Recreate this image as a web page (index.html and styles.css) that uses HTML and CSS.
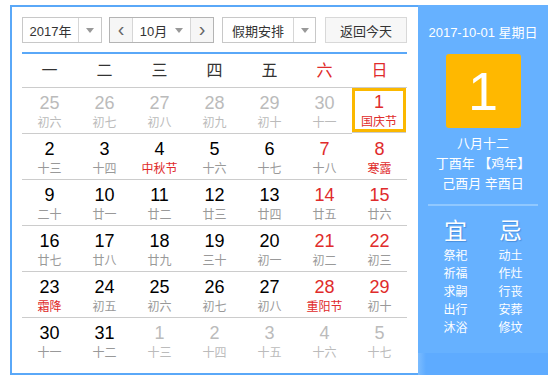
FILE: index.html
```html
<!DOCTYPE html>
<html lang="zh-CN">
<head>
  <meta charset="UTF-8">
  <title>万年历</title>
  <link rel="stylesheet" href="styles.css">
</head>
<body>
<div class="calendar">
  <div class="main">
    <div class="toolbar">
      <div class="select select-year">
        <span class="select-text">2017年</span>
        <span class="select-arrow"><i class="caret"></i></span>
      </div>
      <div class="month-group">
        <span class="month-btn">&lsaquo;</span>
        <span class="month-select">10月 <i class="caret"></i></span>
        <span class="month-btn">&rsaquo;</span>
      </div>
      <div class="select select-holiday">
        <span class="select-text">假期安排</span>
        <span class="select-arrow"><i class="caret"></i></span>
      </div>
      <button class="btn-today">返回今天</button>
    </div>

    <div class="weekdays">
      <span>一</span><span>二</span><span>三</span><span>四</span><span>五</span>
      <span class="red">六</span><span class="red">日</span>
    </div>

    <div class="days">
      <div class="day other"><b>25</b><em>初六</em></div>
      <div class="day other"><b>26</b><em>初七</em></div>
      <div class="day other"><b>27</b><em>初八</em></div>
      <div class="day other"><b>28</b><em>初九</em></div>
      <div class="day other"><b>29</b><em>初十</em></div>
      <div class="day other"><b>30</b><em>十一</em></div>
      <div class="day weekend fest selected"><b>1</b><em>国庆节</em></div>

      <div class="day"><b>2</b><em>十三</em></div>
      <div class="day"><b>3</b><em>十四</em></div>
      <div class="day fest"><b>4</b><em>中秋节</em></div>
      <div class="day"><b>5</b><em>十六</em></div>
      <div class="day"><b>6</b><em>十七</em></div>
      <div class="day weekend"><b>7</b><em>十八</em></div>
      <div class="day weekend fest"><b>8</b><em>寒露</em></div>

      <div class="day"><b>9</b><em>二十</em></div>
      <div class="day"><b>10</b><em>廿一</em></div>
      <div class="day"><b>11</b><em>廿二</em></div>
      <div class="day"><b>12</b><em>廿三</em></div>
      <div class="day"><b>13</b><em>廿四</em></div>
      <div class="day weekend"><b>14</b><em>廿五</em></div>
      <div class="day weekend"><b>15</b><em>廿六</em></div>

      <div class="day"><b>16</b><em>廿七</em></div>
      <div class="day"><b>17</b><em>廿八</em></div>
      <div class="day"><b>18</b><em>廿九</em></div>
      <div class="day"><b>19</b><em>三十</em></div>
      <div class="day"><b>20</b><em>初一</em></div>
      <div class="day weekend"><b>21</b><em>初二</em></div>
      <div class="day weekend"><b>22</b><em>初三</em></div>

      <div class="day fest"><b>23</b><em>霜降</em></div>
      <div class="day"><b>24</b><em>初五</em></div>
      <div class="day"><b>25</b><em>初六</em></div>
      <div class="day"><b>26</b><em>初七</em></div>
      <div class="day"><b>27</b><em>初八</em></div>
      <div class="day weekend fest"><b>28</b><em>重阳节</em></div>
      <div class="day weekend"><b>29</b><em>初十</em></div>

      <div class="day"><b>30</b><em>十一</em></div>
      <div class="day"><b>31</b><em>十二</em></div>
      <div class="day other"><b>1</b><em>十三</em></div>
      <div class="day other"><b>2</b><em>十四</em></div>
      <div class="day other"><b>3</b><em>十五</em></div>
      <div class="day other"><b>4</b><em>十六</em></div>
      <div class="day other"><b>5</b><em>十七</em></div>
    </div>
  </div>

  <div class="side">
    <p class="side-date">2017-10-01 星期日</p>
    <div class="side-day">1</div>
    <div class="side-lunar">
      <p>八月十二</p>
      <p>丁酉年 【鸡年】</p>
      <p>己酉月 辛酉日</p>
    </div>
    <hr class="side-line">
    <div class="almanac">
      <div class="almanac-col">
        <h3>宜</h3>
        <p>祭祀</p><p>祈福</p><p>求嗣</p><p>出行</p><p>沐浴</p>
      </div>
      <div class="almanac-col">
        <h3>忌</h3>
        <p>动土</p><p>作灶</p><p>行丧</p><p>安葬</p><p>修坟</p>
      </div>
    </div>
    <div class="side-foot"></div>
  </div>
</div>
</body>
</html>
```

FILE: styles.css
```css
body {
  margin: 0;
  font-family: 'Liberation Sans', 'Noto Sans CJK SC', sans-serif;
  color: #333333;
}

p, h3 {
  margin: 0;
}

.calendar {
  display: flex;
  width: 534px;
  height: 366px;
  margin: 5px 0 0 10px;
  border: 2px solid #5aa8f8;
  background: #ffffff;
}

.main {
  width: 385px;
  padding: 10px 11px 0 10px;
}

/* toolbar */

.toolbar {
  display: flex;
  height: 26px;
  font-size: 13px;
}

.select {
  display: flex;
  border: 1px solid #c8c8c8;
  box-sizing: border-box;
}

.select-text {
  display: flex;
  align-items: center;
  justify-content: center;
  border-right: 1px solid #d6d6d6;
}

.select-arrow {
  display: flex;
  align-items: center;
  justify-content: center;
  flex: 1;
}

.caret {
  display: inline-block;
  width: 0;
  height: 0;
  border-left: 4px solid transparent;
  border-right: 4px solid transparent;
  border-top: 5px solid #999999;
}

.select-year {
  width: 80px;
}

.select-year .select-text {
  width: 55px;
}

.month-group {
  display: flex;
  width: 105px;
  margin-left: 7px;
  border: 1px solid #b4b4b4;
  box-sizing: border-box;
}

.month-btn {
  display: flex;
  align-items: center;
  justify-content: center;
  width: 22px;
  background: #f6f6f6;
  color: #666666;
  font-size: 20px;
  line-height: 1;
  padding-bottom: 3px;
  box-sizing: border-box;
}

.month-select {
  display: flex;
  align-items: center;
  justify-content: center;
  gap: 8px;
  flex: 1;
  border-left: 1px solid #d6d6d6;
  border-right: 1px solid #d6d6d6;
}

.select-holiday {
  width: 94px;
  margin-left: 8px;
}

.select-holiday .select-text {
  width: 70px;
}

.btn-today {
  width: 82px;
  margin-left: 9px;
  padding: 0;
  border: 1px solid #d8d8d8;
  background: #f7f7f7;
  font: inherit;
  font-size: 13px;
  color: #333333;
}

/* grid */

.weekdays {
  display: grid;
  grid-template-columns: repeat(7, 55px);
  height: 33px;
  margin-top: 9px;
  border-top: 2px solid #5aa8f8;
  border-bottom: 1px solid #cccccc;
  font-size: 16px;
  line-height: 33px;
  text-align: center;
}

.red {
  color: #e02b2b;
}

.days {
  display: grid;
  grid-template-columns: repeat(7, 55px);
  grid-auto-rows: 46px;
}

.day {
  display: flex;
  flex-direction: column;
  align-items: center;
  padding-top: 5px;
  border-bottom: 1px solid #cccccc;
  box-sizing: border-box;
}

.day:nth-last-child(-n+7) {
  border-bottom: 0;
}

.day b {
  font-weight: normal;
  font-size: 18px;
  line-height: 20px;
  color: #000000;
}

.day em {
  margin-top: 1px;
  font-style: normal;
  font-size: 12px;
  line-height: 18px;
  color: #999999;
}

.day.weekend b,
.day.fest em {
  color: #e02b2b;
}

.day.other b,
.day.other em {
  color: #bbbbbb;
}

.day.selected {
  box-shadow: inset 0 0 0 3px #fbb800;
  margin: 0 1px 1px 0;
  padding-top: 4px;
}

/* side panel */

.side {
  position: relative;
  width: 130px;
  margin: -2px -2px -2px 0;
  background: #66b1ff;
  color: #ffffff;
  text-align: center;
}

.side-date {
  margin-top: 19px;
  font-size: 13px;
  line-height: 18px;
}

.side-day {
  width: 75px;
  height: 74px;
  margin: 12px auto 0;
  background: #ffb800;
  border-radius: 3px;
  font-size: 54px;
  line-height: 74px;
}

.side-lunar {
  margin-top: 6px;
  font-size: 13px;
  line-height: 20px;
}

.side-line {
  width: 110px;
  height: 2px;
  margin: 10px auto 0;
  border: 0;
  background: #90c8ff;
}

.almanac {
  display: flex;
  justify-content: center;
  margin-top: 12px;
}

.almanac-col {
  width: 55px;
}

.almanac h3 {
  font-weight: normal;
  font-size: 23px;
  line-height: 26px;
  margin-bottom: 3px;
  text-shadow: 1px 1px 1px rgba(0, 60, 140, 0.3);
}

.almanac p {
  font-size: 12px;
  line-height: 18px;
}

.side-foot {
  position: absolute;
  left: 0;
  right: 0;
  bottom: 0;
  height: 22px;
  background: linear-gradient(to right, #7bbcff 0, #5eabff 8px);
}
```
